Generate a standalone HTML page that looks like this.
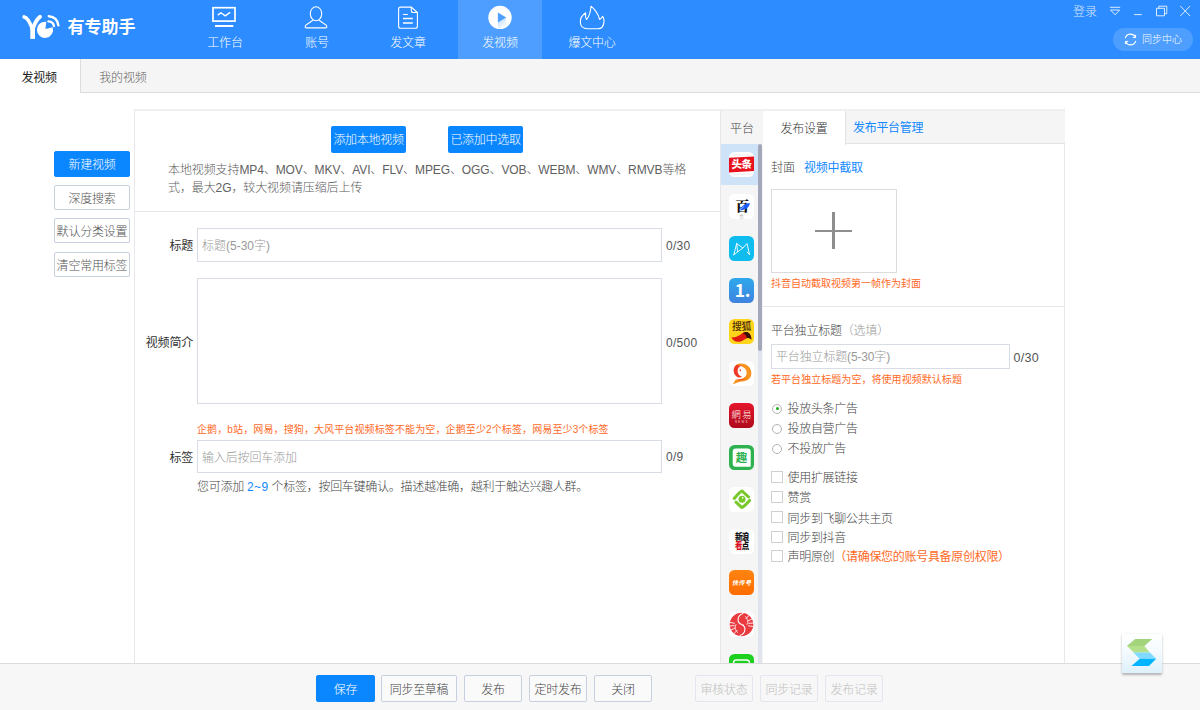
<!DOCTYPE html>
<html lang="zh-CN">
<head>
<meta charset="utf-8">
<title>有专助手</title>
<style>
*{box-sizing:border-box;margin:0;padding:0}
html,body{width:1200px;height:710px;overflow:hidden;background:#fff}
body{font-family:"Liberation Sans","Noto Sans CJK SC",sans-serif;font-size:12px;color:#333;position:relative;font-weight:300}
.abs{position:absolute}
/* header */
#hdr{position:absolute;left:0;top:0;width:1200px;height:59px;background:#2d8cff}
#logo-t{position:absolute;left:67.5px;top:16px;font-size:17px;font-weight:bold;color:#fff;line-height:24px;letter-spacing:0}
.nav{position:absolute;top:0;width:84px;height:59px;text-align:center;color:#fff}
.nav.on{background:#4d9eff}
.nav svg{position:absolute;left:0;top:0}
.nav span{position:absolute;left:0;width:84px;top:35px;line-height:16px;font-size:12px;letter-spacing:-.2px}
#login{position:absolute;left:1073px;top:4px;color:rgba(255,255,255,.82);font-size:12px;line-height:16px}
#sync{position:absolute;left:1113px;top:28px;width:80px;height:23px;border-radius:12px;background:#4d9eff;color:#fff;font-size:10px;line-height:23px}
#sync span{position:absolute;left:29px;top:0}
/* tab bar */
#tabs{position:absolute;left:0;top:59px;width:1200px;height:34px;background:#f5f5f5;border-bottom:1px solid #dcdcdc}
#tab1{position:absolute;left:0;top:0;width:81px;height:34px;background:#fff;border-right:1px solid #dcdcdc;line-height:38px;padding-left:21.500px;color:#222;font-weight:400;letter-spacing:-.3px}
#tab2{position:absolute;left:99.300px;top:0;line-height:38px;color:#666;letter-spacing:-.2px}
/* left buttons */
.lb{position:absolute;left:54px;width:76px;height:25px;border:1px solid #c8d0e0;border-radius:2px;background:#fff;text-align:center;line-height:27.600px;color:#555;font-size:12px;white-space:nowrap;letter-spacing:-.2px;overflow:hidden}
.lb.pri{background:#0a86ff;border-color:#0a86ff;color:#fff}
/* main panel */
#main{position:absolute;left:134px;top:109px;width:931px;height:555px;border:1px solid #e8e8ec;border-top:2px solid #f0f0f3;border-bottom:none;background:#fff}
.bbtn{position:absolute;top:126px;width:75px;height:27px;background:#0a86ff;color:#fff;border-radius:2px;text-align:center;line-height:29px;font-size:12px;letter-spacing:-0.3px}
#desc{position:absolute;left:168px;top:161.300px;width:540px;line-height:18px;color:#606060;font-size:12px;letter-spacing:-0.1px}
.hr{position:absolute;height:1px;background:#e6e6e6}
.lbl{position:absolute;color:#333;font-size:12px;line-height:16px;text-align:right;font-weight:400;letter-spacing:-.2px}
.inp{position:absolute;border:1px solid #d8dce5;background:#fff;color:#999;font-size:12px;padding-left:4px}
.cnt{position:absolute;color:#555;font-size:12px;line-height:16px;letter-spacing:.3px}
.warn{position:absolute;color:#ff6a1f;font-size:10px;line-height:14px;white-space:nowrap;font-weight:400}
/* platform col */
#pcol{position:absolute;left:720px;top:110.500px;width:43px;height:553px;background:#f5f5f5;border-left:1px solid #e6e6ea}
.pi{position:absolute;left:729px;width:25px;height:25px}
/* bottom */
#bot{position:absolute;left:0;top:663px;width:1200px;height:47px;background:#f7f7f7;border-top:1px solid #dcdcdc}
.fb{position:absolute;top:675px;height:27px;border:1px solid #c8d0e0;border-radius:2px;background:#fafafa;text-align:center;line-height:28.500px;overflow:hidden;color:#444;font-size:12px;letter-spacing:-.3px}
.fb.pri{background:#0a86ff;border-color:#0a86ff;color:#fff}
.fb.dis{background:#f7f7f7;border-color:#e3e6ee;color:#c0c0c0}
.rd{position:absolute;left:772px;width:10px;height:10px;border:1px solid #b2b2b2;border-radius:50%;background:#fff}
.ck{position:absolute;left:771.400px;width:11.600px;height:11.600px;border:1px solid #d0d0d0;background:#fff}
.ol{position:absolute;left:787.500px;color:#444;font-size:12px;line-height:16px;white-space:nowrap;letter-spacing:-.3px}
</style>
</head>
<body>
<div id="hdr">
  <svg class="abs" style="left:15px;top:5px" width="60" height="45" viewBox="0 0 60 45">
    <path d="M9.2 11.9 Q13.6 13 17.6 24.500" fill="none" stroke="#fff" stroke-width="3.6" stroke-linecap="round"/>
    <path d="M25 11.800 Q20.500 15.500 17.600 24.500" fill="none" stroke="#fff" stroke-width="3.800" stroke-linecap="round"/>
    <path d="M15.300 21 L20 21 L20 33.900 L15.300 33.900 Z" fill="#fff"/>
    <path d="M30.400 24.100 L31.300 16.800 A8.100 8.100 0 1 0 37.700 22.300 Z" fill="#fff"/>
    <path d="M33.800 11.200 Q42.200 12 43.400 20.300" fill="none" stroke="#fff" stroke-width="2.400" stroke-linecap="round"/>
    <path d="M33.400 16.400 Q38.200 16.800 39 21" fill="none" stroke="#fff" stroke-width="2.300" stroke-linecap="round"/>
  </svg>
  <div id="logo-t">有专助手</div>

  <div class="nav" style="left:183px">
    <svg width="84" height="34" viewBox="0 0 84 34" fill="none" stroke="#fff"><rect x="30" y="7.700" width="22" height="13.400" stroke-width="1.700"/><path d="M32 26h18.300" stroke-width="2"/><path d="M34.800 15.100l3.100-2.300 4.300 3.100 5-3.500" stroke-width="1.400"/></svg>
    <span>工作台</span></div>
  <div class="nav" style="left:275px">
    <svg width="84" height="34" viewBox="0 0 84 34" fill="none" stroke="#fff" stroke-width="1.100"><ellipse cx="41" cy="13.700" rx="5.700" ry="7"/><path d="M37.900 20.300 L30.600 25.400 Q29.400 27.900 31.500 27.900 L50.500 27.900 Q52.600 27.900 51.400 25.400 L44.100 20.300"/></svg>
    <span>账号</span></div>
  <div class="nav" style="left:366px">
    <svg width="84" height="34" viewBox="0 0 84 34" fill="none" stroke="#fff" stroke-width="1.100"><path d="M34.600 7.100 H45.300 L51.400 12.500 V26.200 Q51.400 28.200 49.400 28.200 H34.600 Q32.600 28.200 32.600 26.200 V9.100 Q32.600 7.100 34.600 7.100 Z"/><path d="M45.300 7.100 V10.500 Q45.300 12.500 47.300 12.500 H51.400"/><path d="M37 14.500h4.800" stroke-width="1.100"/><path d="M37 18.600h9.800M37 23h9.800" stroke-width="1.500"/></svg>
    <span>发文章</span></div>
  <div class="nav on" style="left:458px">
    <svg width="84" height="34" viewBox="0 0 84 34"><defs><linearGradient id="pg" x1="0" y1="0" x2="0.600" y2="1"><stop offset="0" stop-color="#4d9eff" stop-opacity=".42"/><stop offset="1" stop-color="#4d9eff" stop-opacity="0"/></linearGradient></defs><circle cx="42" cy="17.400" r="11.700" fill="#fff"/><path d="M39.900 22.500 L48 17.600 L48.500 25 L40 29 Z" fill="url(#pg)"/><path d="M39.900 12.600 L48.200 17.500 L39.900 22.600 Z" fill="#4d9eff"/></svg>
    <span>发视频</span></div>
  <div class="nav" style="left:550px">
    <svg width="84" height="34" viewBox="0 0 84 34" fill="none" stroke="#fff" stroke-width="1.100" stroke-linejoin="round"><path d="M41 6.200 C45 9.500 48.300 14.500 49.600 19.400 C51 18.600 52.200 17.600 52.700 16.300 C53.800 18 54.100 19.800 54 21.600 C53.800 26 51.500 28.800 47.500 28.800 L37.700 28.800 C33 28.800 30.400 26 30.300 21.800 C30.200 18 32.500 15 35.600 12.800 C35.300 15.500 35.500 18 36.500 19.500 C39.300 16.500 40.600 11.500 41 6.200 Z"/></svg>
    <span>爆文中心</span></div>

  <div id="login">登录</div>
  <svg class="abs" style="left:1100px;top:0" width="100" height="24" viewBox="0 0 100 24" fill="none" stroke="#fff" stroke-opacity=".82" stroke-width="1">
    <path d="M9.900 7.300h10.300M10.600 10h9l-4.500 4.800z"/>
    <path d="M34 14.600h7.800"/>
    <path d="M56.500 8.300h8v7.500h-8zM58.800 8.300v-2.100h8v7.500h-2.300"/>
    <path d="M80.300 6l9.800 10M90.100 6l-9.800 10"/>
  </svg>
  <div id="sync">
    <svg class="abs" style="left:11px;top:5px" width="13" height="13" viewBox="0 0 13 13" fill="none" stroke="#fff" stroke-width="1.100"><path d="M1.300 5.200 A5.300 5.300 0 0 1 11.300 4.300M11.700 7.800 A5.300 5.300 0 0 1 1.700 8.700"/><path d="M11.600 1.800v2.800h-2.800M1.400 11.200v-2.800h2.800" stroke-width="1"/></svg>
    <span>同步中心</span>
  </div>
</div>

<div id="tabs"><div id="tab1">发视频</div><div id="tab2">我的视频</div></div>

<div class="lb pri" style="top:151px;height:25.500px">新建视频</div>
<div class="lb" style="top:185px">深度搜索</div>
<div class="lb" style="top:218px">默认分类设置</div>
<div class="lb" style="top:252px">清空常用标签</div>

<div id="main"></div>
<div class="bbtn" style="left:331px">添加本地视频</div>
<div class="bbtn" style="left:448px">已添加中选取</div>
<div id="desc">本地视频支持MP4、MOV、MKV、AVI、FLV、MPEG、OGG、VOB、WEBM、WMV、RMVB等格式，最大2G，较大视频请压缩后上传</div>
<div class="hr" style="left:135px;top:211px;width:585px"></div>

<div class="lbl" style="left:140px;top:238px;width:53px">标题</div>
<div class="inp" style="left:197px;top:228px;width:465px;height:34px;line-height:34px">标题(5-30字)</div>
<div class="cnt" style="left:666px;top:238px">0/30</div>

<div class="lbl" style="left:140px;top:334.500px;width:53px">视频简介</div>
<div class="inp" style="left:197px;top:278px;width:465px;height:126px"></div>
<div class="cnt" style="left:666px;top:334.500px">0/500</div>

<div class="warn" style="left:197px;top:422.500px;letter-spacing:.12px">企鹅，b站，网易，搜狗，大风平台视频标签不能为空，企鹅至少2个标签，网易至少3个标签</div>
<div class="lbl" style="left:140px;top:449.500px;width:53px">标签</div>
<div class="inp" style="left:197px;top:440px;width:465px;height:33px;line-height:34px;letter-spacing:-.15px">输入后按回车添加</div>
<div class="cnt" style="left:666px;top:449px">0/9</div>
<div class="abs" style="left:197px;top:479px;line-height:17px;color:#444;white-space:nowrap;letter-spacing:-.28px">您可添加 <span style="color:#1089ff;letter-spacing:.4px;font-weight:400">2~9</span> 个标签，按回车键确认。描述越准确，越利于触达兴趣人群。</div>

<!-- platform column -->
<div id="pcol"></div>
<div class="abs" style="left:730px;top:120.500px;color:#444;line-height:16px">平台</div>
<div class="abs" style="left:721px;top:144.400px;width:37px;height:41px;background:#cfe3f8"></div>
<div class="abs" style="left:758px;top:346px;width:4.200px;height:317px;background:#e1e4ec"></div>
<div class="abs" style="left:758px;top:144.400px;width:4.200px;height:206.500px;background:#a2a8ba;border-radius:2px"></div>


<!-- platform icons -->
<svg class="pi" style="top:152px" viewBox="0 0 25 25"><rect width="25" height="25" rx="5.500" fill="#fff"/><path d="M3.500 3h18M3.500 22.200h18" stroke="#ddd" stroke-width=".6"/><path d="M0 5.800 L25 4.400 L25 19 L0 20.600 Z" fill="#e8121e"/><text x="12.500" y="16.200" text-anchor="middle" font-size="10.500" font-weight="900" fill="#fff" font-family="'Liberation Sans','Noto Sans CJK SC',sans-serif" letter-spacing="-.6">头条</text></svg>
<svg class="pi" style="top:193.700px" viewBox="0 0 25 25"><rect width="25" height="25" rx="5.500" fill="#fff"/><text x="13.300" y="16.800" text-anchor="middle" font-size="14" font-weight="900" fill="#111" font-family="'Liberation Serif','Noto Serif CJK SC',serif">百</text><path d="M10.300 16.600 Q12.500 10 21 9 Q20 15 12.800 16.200 Z" fill="#1a5cff"/><path d="M10.300 16.300 L15 12.500" stroke="#fff" stroke-width=".5"/><text x="12.500" y="23.600" text-anchor="middle" font-size="4.500" fill="#999" font-family="'Liberation Sans','Noto Sans CJK SC',sans-serif">合</text></svg>
<svg class="pi" style="top:235.700px" viewBox="0 0 25 25"><rect width="25" height="25" rx="5.500" fill="#0fbcf0"/><path d="M4.800 18.800 L7.700 7.500 L13.900 12 L18 7.500 L20.600 18.800 L18.300 16.200 M13.900 12 L4.800 18.800 M7.700 7.500 L8.600 15.600" fill="none" stroke="#fff" stroke-width=".9" stroke-linejoin="round" stroke-linecap="round"/></svg>
<svg class="pi" style="top:277.600px" viewBox="0 0 25 25"><defs><linearGradient id="g1" x1="0" y1="0" x2="0" y2="1"><stop offset="0" stop-color="#2ea8ec"/><stop offset="1" stop-color="#4083e0"/></linearGradient></defs><rect width="25" height="25" rx="5.500" fill="url(#g1)"/><text x="5.800" y="19.400" font-size="17.500" font-weight="700" fill="#fff" font-family="'Noto Sans CJK SC',sans-serif" letter-spacing="-.3">1.</text></svg>
<svg class="pi" style="top:319px" viewBox="0 0 25 25"><rect width="25" height="25" rx="5.500" fill="#ffd41a"/><text x="12.500" y="11.300" text-anchor="middle" font-size="9.800" font-weight="500" fill="#4a2c0a" font-family="'Liberation Sans','Noto Sans CJK SC',sans-serif" letter-spacing="-.3">搜狐</text><path d="M2.600 18.200 C5 18.800 9 17.600 12 15.200 C14.500 13.200 17 12.600 19 13.400 C21.500 14.800 22.600 18 22.300 20.600 C20.500 18.800 18.500 18.600 16 20.200 C11 23.800 4.500 24 2.600 18.200 Z" fill="#e01a10"/><path d="M13.600 14.200 C15.500 13 17.500 12.800 19 13.400 C21.500 14.800 22.600 18 22.300 20.600 C21 19.200 19.500 18.700 17.800 19.200 C17.800 17 16.200 15 13.600 14.200 Z" fill="#3a1208"/></svg>
<svg class="pi" style="top:361px" viewBox="0 0 25 25"><rect width="25" height="25" rx="5.500" fill="#fff"/><path d="M7 4 C12 .8 21.500 3 22.300 11.500 C22.800 17.500 17.500 21.200 11.500 20.400 L3.700 23.300 L6.800 18.600 C8.500 19 10 18.700 11.200 18.200 C15.500 17.800 18.200 14.500 17.600 10.800 C17 6.500 12 4.500 7 4 Z" fill="#f7931e"/><path d="M7 4 C3.800 7 4 12 7 15 C9 16.800 11.500 17 13 15.800 C10.500 15.200 8.600 13 8.600 10 C8.600 7.500 10 5.600 12.200 4.800 C10.500 4 8.500 3.800 7 4 Z" fill="#ee3a24"/><path d="M6.800 18.600 C11 20.500 16.500 19 18.500 14.500 C17 17.500 13.500 18.800 11.200 18.200 Z" fill="#ee4a24"/><ellipse cx="11.300" cy="9.300" rx=".7" ry="1.100" fill="#ee3a24"/></svg>
<svg class="pi" style="top:402.800px" viewBox="0 0 25 25"><defs><linearGradient id="g2" x1="0" y1="0" x2="0" y2="1"><stop offset="0" stop-color="#e5152c"/><stop offset="1" stop-color="#ae0a1b"/></linearGradient></defs><rect width="25" height="25" rx="5.500" fill="url(#g2)"/><text x="13.200" y="14.600" text-anchor="middle" font-size="9.300" fill="#fff" font-family="'Liberation Sans','Noto Sans CJK TC','Noto Sans CJK SC',sans-serif" letter-spacing="1.400">網易</text><text x="12.800" y="19.600" text-anchor="middle" font-size="2.800" fill="#fff" fill-opacity=".85" font-family="'Liberation Sans',sans-serif" letter-spacing="1.300">NEWS</text></svg>
<svg class="pi" style="top:444.700px" viewBox="0 0 25 25"><rect width="25" height="25" rx="5.500" fill="#2db24f"/><path d="M6.700 3.500 H18.500 Q21.700 3.500 21.700 6.700 V21.700 H6.700 Q3.700 21.700 3.700 18.700 V6.500 Q3.700 3.500 6.700 3.500 Z" fill="#fff"/><text x="12.600" y="16.800" text-anchor="middle" font-size="11.500" font-weight="bold" fill="#2db24f" font-family="'Liberation Sans','Noto Sans CJK SC',sans-serif">趣</text></svg>
<svg class="pi" style="top:486.800px" viewBox="0 0 25 25"><rect width="25" height="25" rx="5.500" fill="#fff"/><path d="M5.200 11.400 Q12.500 3 13.400 4.300 L19.600 10" fill="none" stroke="#78c82a" stroke-width="3" stroke-linecap="round" stroke-linejoin="round"/><path d="M7 15.100 L12.600 20.300 Q13.500 21.300 20.600 13.400" fill="none" stroke="#78c82a" stroke-width="3" stroke-linecap="round" stroke-linejoin="round"/><circle cx="13" cy="12.200" r="3.500" fill="#78c82a"/><ellipse cx="13.700" cy="10.800" rx=".7" ry="1" fill="#fff"/></svg>
<svg class="pi" style="top:528.500px" viewBox="0 0 25 25"><rect width="25" height="25" rx="5.500" fill="#fff"/><text x="14.200" y="10" transform="scale(.9 1.120)" text-anchor="middle" font-size="8.300" font-weight="900" fill="#111" font-family="'Liberation Sans','Noto Sans CJK SC',sans-serif" letter-spacing="-.7">新浪</text><text x="14.200" y="18.200" transform="scale(.9 1.120)" text-anchor="middle" font-size="8.300" font-weight="900" fill="#111" font-family="'Liberation Sans','Noto Sans CJK SC',sans-serif" letter-spacing="-.7"><tspan fill="#d7141e">看</tspan>点</text></svg>
<svg class="pi" style="top:570px" viewBox="0 0 25 25"><defs><linearGradient id="g3" x1="0" y1="0" x2="0" y2="1"><stop offset="0" stop-color="#ff8410"/><stop offset="1" stop-color="#ff6c00"/></linearGradient></defs><rect width="25" height="25" rx="5.500" fill="url(#g3)"/><text x="12.800" y="15" text-anchor="middle" font-size="6" font-weight="bold" font-style="italic" fill="#fff" font-family="'Liberation Sans','Noto Sans CJK SC',sans-serif" letter-spacing=".5">快传号</text></svg>
<svg class="pi" style="top:612px" viewBox="0 0 25 25"><rect width="25" height="25" rx="5.500" fill="#fff"/><circle cx="12.500" cy="12.500" r="11.800" fill="#ea3b41"/><g fill="none" stroke="#fff" stroke-linecap="round"><path d="M14 1.500 C8 3.500 7.500 10.500 12.500 12.500 C17.500 14.500 17 21.500 11 23.500" stroke-width="1.100"/><path d="M1 10.500 L5.500 11.200 M.8 14 L5.200 13.600 M2.200 18 L6 16 M5 21.500 L8 18.500" stroke-width=".9"/><path d="M24 14.500 L19.500 13.800 M24.200 11 L19.800 11.400 M22.800 7 L19 9 M20 3.500 L17 6.500" stroke-width=".9"/><path d="M16.500 4.500 C19 7 19.500 10 18 12.500M8.500 20.500 C6 18 5.500 15 7 12.500" stroke-width=".8"/></g><circle cx="14.300" cy="13.200" r=".7" fill="#fff"/></svg>
<svg class="pi" style="top:654px" viewBox="0 0 25 25"><rect width="25" height="25" rx="5.500" fill="#1ed01e"/><rect x="4.500" y="6" width="16" height="12" rx="3" fill="none" stroke="#fff" stroke-width="1.300"/></svg>

<!-- settings -->
<div class="abs" style="left:763px;top:110.500px;width:302px;height:33.500px;background:#f5f5f5;border-bottom:1px solid #e3e3e3"></div>
<div class="abs" style="left:763px;top:110.500px;width:83px;height:34.500px;background:#fff;border-right:1px solid #e3e3e3;line-height:36px;text-align:center;color:#333;letter-spacing:-.2px">发布设置</div>
<div class="abs" style="left:853px;top:110px;line-height:37px;color:#1089ff;letter-spacing:-.3px;font-weight:400">发布平台管理</div>

<div class="abs" style="left:771px;top:160px;line-height:16px;color:#444">封面</div>
<div class="abs" style="left:804px;top:160px;line-height:16px;color:#1089ff;letter-spacing:-.25px;font-weight:400">视频中截取</div>
<div class="abs" style="left:771px;top:189px;width:126px;height:84px;border:1px solid #dcdcdc;background:#fff"></div>
<div class="abs" style="left:815px;top:229.500px;width:37px;height:2.800px;background:#8e8e8e"></div>
<div class="abs" style="left:832.300px;top:212px;width:2.800px;height:37px;background:#8e8e8e"></div>
<div class="warn" style="left:771px;top:277px">抖音自动截取视频第一帧作为封面</div>
<div class="hr" style="left:763px;top:306px;width:302px"></div>

<div class="abs" style="left:771px;top:323px;line-height:16px;color:#444;letter-spacing:-.2px">平台独立标题<span style="color:#999">（选填）</span></div>
<div class="inp" style="left:771px;top:344px;width:239px;height:25px;line-height:25px;letter-spacing:-.15px">平台独立标题(5-30字)</div>
<div class="cnt" style="left:1013.500px;top:350px;font-size:12.500px">0/30</div>
<div class="warn" style="left:771px;top:373px;letter-spacing:.05px">若平台独立标题为空，将使用视频默认标题</div>

<div class="rd" style="top:403.800px"><div class="abs" style="left:2.500px;top:2.500px;width:3px;height:3px;border-radius:50%;background:#1aad19"></div></div>
<div class="ol" style="top:401px">投放头条广告</div>
<div class="rd" style="top:424px"></div>
<div class="ol" style="top:421px">投放自营广告</div>
<div class="rd" style="top:444px"></div>
<div class="ol" style="top:441px">不投放广告</div>

<div class="ck" style="top:471px"></div><div class="ol" style="top:470px">使用扩展链接</div>
<div class="ck" style="top:491px"></div><div class="ol" style="top:490px">赞赏</div>
<div class="ck" style="top:511px"></div><div class="ol" style="top:510.5px">同步到飞聊公共主页</div>
<div class="ck" style="top:531px"></div><div class="ol" style="top:530px">同步到抖音</div>
<div class="ck" style="top:550px"></div><div class="ol" style="top:549px">声明原创<span style="color:#ff6a1f;font-weight:400">（请确保您的账号具备原创权限）</span></div>

<!-- bottom -->
<div id="bot"></div>
<div class="fb pri" style="left:316px;width:59px">保存</div>
<div class="fb" style="left:381px;width:76px">同步至草稿</div>
<div class="fb" style="left:464px;width:58px">发布</div>
<div class="fb" style="left:529px;width:58px">定时发布</div>
<div class="fb" style="left:594px;width:58px">关闭</div>
<div class="fb dis" style="left:695px;width:58px">审核状态</div>
<div class="fb dis" style="left:760px;width:58px">同步记录</div>
<div class="fb dis" style="left:825px;width:58px">发布记录</div>


<div class="abs" style="left:1121.500px;top:634px;width:40px;height:38.500px;background:linear-gradient(#ffffff,#f4fafe 45%,#def1fc);box-shadow:0 1.500px 2.500px rgba(0,0,0,.28);border-radius:1px"></div>
<svg class="abs" style="left:1121px;top:634px" width="42" height="40" viewBox="1121 634 42 40">
  <polygon points="1126.900,645.900 1135.200,639 1152.200,639 1144.300,645.900" fill="#a3d47c"/>
  <polygon points="1126.900,645.900 1144.300,645.900 1149.800,652.500 1133.900,652.500" fill="#b4df8b"/>
  <polygon points="1133.300,652.500 1149.800,652.500 1156.200,658.800 1139.700,658.800" fill="#80d9ff"/>
  <polygon points="1139.700,658.800 1156.200,658.800 1148.900,666.100 1131.500,666.100" fill="#00b4ff"/>
</svg>

</body>
</html>
